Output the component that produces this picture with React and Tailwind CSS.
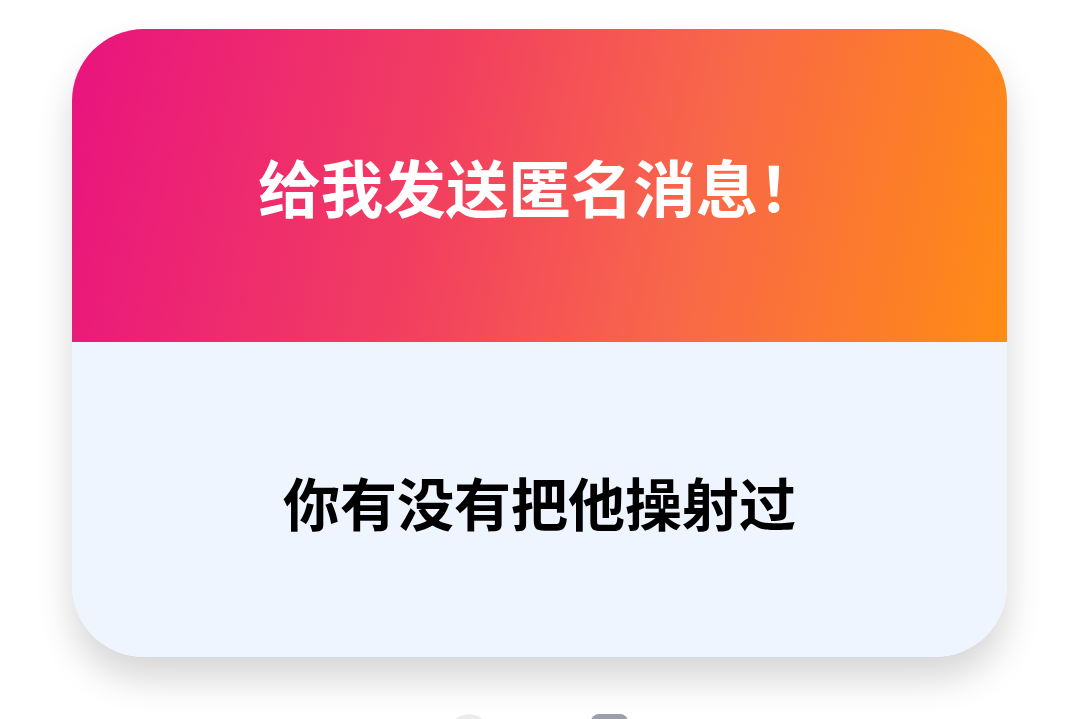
export default function App() {
  return (
    <div className="min-h-[719px] w-full bg-white overflow-hidden" style={{ fontFamily: '"Noto Sans CJK SC", "Noto Sans", sans-serif' }}>
      <div className="pt-[29px] px-[72px]">
        <div className="w-[935px] rounded-[72px] overflow-hidden shadow-[0_22px_36px_rgba(0,0,0,0.16)]">
          <div className="h-[313px] flex items-center justify-center bg-[linear-gradient(102deg,#e9137f_0%,#f2405f_40%,#f8664a_65%,#ff8c14_100%)]">
            <h1 className="text-[62.5px] font-bold text-white leading-none mt-[2px]">给我发送匿名消息！</h1>
          </div>
          <div className="h-[315px] flex items-center justify-center bg-[#eff5fe]">
            <p className="text-[57px] font-semibold text-black leading-none mt-[4px]">你有没有把他操射过</p>
          </div>
        </div>
        <div className="mt-[57px] flex justify-center gap-[102px] pr-[3px]">
          <div className="w-[40px] h-[40px] rounded-full bg-[#ececec]"></div>
          <div className="w-[37px] h-[37px] rounded-[8px] bg-[#9aa0a8]"></div>
        </div>
      </div>
    </div>
  );
}
